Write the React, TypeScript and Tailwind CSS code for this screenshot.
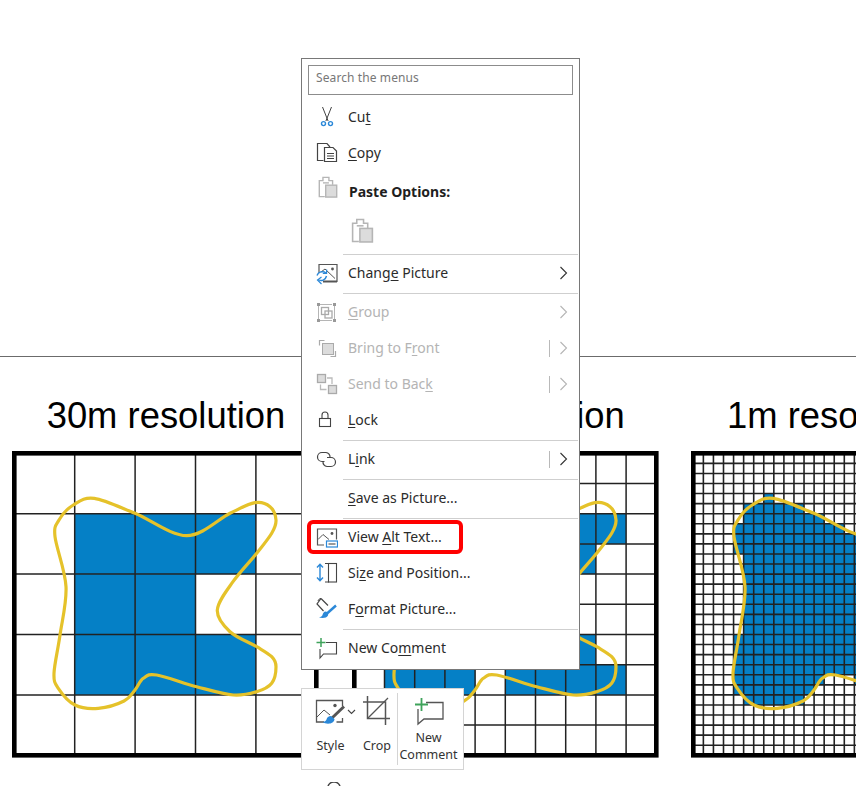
import type { ReactNode } from 'react';

const OUTLINE: [number, number][] = [
  [82.3, 47.3], [123, 62.3], [174.7, 84.7], [218, 62.3], [243, 51.7], [258, 55.7], [264, 69], [259.7, 82.3], [244.7, 102.3],
  [221, 130.7], [205.3, 159], [218, 180.7], [244.7, 195.7], [259.7, 205.7], [264, 215.7], [259.7, 232.3], [244.7, 240.7], [221.3, 244],
  [184.7, 235.7], [144.7, 224], [131.3, 227.3], [123, 239], [112, 250], [86.3, 257.3], [63, 254], [46.3, 237.3], [42, 222.3],
  [48, 184], [54, 135.7], [43, 85.7], [47, 69], [61.3, 54],
];

function buildOutline() {
  const n = OUTLINE.length;
  let d = `M${OUTLINE[0][0]} ${OUTLINE[0][1]}`;
  const poly: [number, number][] = [];
  for (let i = 0; i < n; i++) {
    const p0 = OUTLINE[(i - 1 + n) % n];
    const p1 = OUTLINE[i];
    const p2 = OUTLINE[(i + 1) % n];
    const p3 = OUTLINE[(i + 2) % n];
    const c1 = [p1[0] + (p2[0] - p0[0]) / 6, p1[1] + (p2[1] - p0[1]) / 6];
    const c2 = [p2[0] - (p3[0] - p1[0]) / 6, p2[1] - (p3[1] - p1[1]) / 6];
    d += ` C${c1[0].toFixed(1)} ${c1[1].toFixed(1)} ${c2[0].toFixed(1)} ${c2[1].toFixed(1)} ${p2[0]} ${p2[1]}`;
    for (let s = 0; s < 8; s++) {
      const t = s / 8;
      const u = 1 - t;
      poly.push([
        u * u * u * p1[0] + 3 * u * u * t * c1[0] + 3 * u * t * t * c2[0] + t * t * t * p2[0],
        u * u * u * p1[1] + 3 * u * u * t * c1[1] + 3 * u * t * t * c2[1] + t * t * t * p2[1],
      ]);
    }
  }
  return { d, poly };
}

const { d: outlinePath, poly } = buildOutline();

function inside(x: number, y: number) {
  let hit = false;
  for (let i = 0, j = poly.length - 1; i < poly.length; j = i++) {
    const [xi, yi] = poly[i];
    const [xj, yj] = poly[j];
    if (yi > y !== yj > y && x < ((xj - xi) * (y - yi)) / (yj - yi) + xi) hit = !hit;
  }
  return hit;
}

function Chart({ cells, title, titleClass }: { cells: number; title: string; titleClass: string }) {
  const origin = 2.3;
  const size = 302;
  const step = size / cells;
  const idx = Array.from({ length: cells }, (_, i) => i);
  return (
    <div className="w-[308px] shrink-0">
      <div className={`h-[95px] pt-[37px] text-[36.4px] leading-[46px] whitespace-nowrap text-black ${titleClass}`}>{title}</div>
      <svg width="308" height="307" viewBox="0 0 308 307" className="block">
        <rect x="0" y="0" width="308" height="307" fill="#fff" />
        {idx.map((r) =>
          idx.map((c) =>
            inside(origin + (c + 0.5) * step, origin + (r + 0.5) * step) ? (
              <rect key={`${r}-${c}`} x={origin + c * step} y={origin + r * step} width={step} height={step} fill="#0580c6" />
            ) : null,
          ),
        )}
        {idx.slice(1).map((i) => (
          <g key={i} stroke="#222" strokeWidth={cells > 20 ? 1.6 : 1.5}>
            <line x1={origin + i * step} x2={origin + i * step} y1={origin} y2={origin + size} />
            <line y1={origin + i * step} y2={origin + i * step} x1={origin} x2={origin + size} />
          </g>
        ))}
        <path d={outlinePath} fill="none" stroke="#e5c22a" strokeWidth="3.2" />
        <rect x={origin} y={origin} width={size} height={size} fill="none" stroke="#000" strokeWidth="4.6" />
      </svg>
    </div>
  );
}

const ink = '#444';
const blue = '#2b88d8';
const dim = '#b5b5b5';
const dimFill = '#dcdcdc';

function Ico({ children }: { children: ReactNode }) {
  return (
    <svg width="24" height="24" viewBox="0 0 24 24" fill="none" strokeWidth="1" className="block shrink-0">
      {children}
    </svg>
  );
}

const CutIcon = () => (
  <Ico>
    <path d="M8.500 2l5.600 14M17.500 2l-5.600 14" stroke={ink} />
    <circle cx="9.500" cy="18.600" r="2" stroke={blue} strokeWidth="1.400" />
    <circle cx="16.500" cy="18.600" r="2" stroke={blue} strokeWidth="1.400" />
  </Ico>
);

const CopyIcon = () => (
  <Ico>
    <path d="M9.500 19.500H3.500V2.500H13l3 3.500" stroke={ink} strokeWidth="1.200" />
    <path d="M10.500 6.500H19l3.500 3.500v10.500h-12z" stroke={ink} fill="#fff" strokeWidth="1.200" />
    <path d="M13 12.500h7M13 15h7M13 17.500h7" stroke={ink} />
  </Ico>
);

function PasteIcon({ size }: { size: number }) {
  return (
    <svg width={size} height={size} viewBox="0 0 24 24" fill="none" className="block shrink-0">
      <path d="M8.500 22.500H2.500V5h4V1.500h6.500V5h4v4.500" stroke={dim} strokeWidth="1.500" />
      <path d="M6.500 7.500h6.500" stroke={dim} strokeWidth="1.500" />
      <rect x="9.500" y="10" width="12" height="13" stroke={dim} strokeWidth="1.500" fill={dimFill} />
    </svg>
  );
}

const ChangeIcon = () => (
  <Ico>
    <path d="M5 12V3.500h18v17H12" stroke="#555" strokeWidth="1.200" />
    <path d="M7 11l4-3 10 9.500" stroke="#555" />
    <circle cx="18.500" cy="8" r="1.400" fill="#555" />
    <path d="M9 20.500H23" stroke="#555" strokeWidth="2" />
    <path d="M3 14.500a5.500 5 0 0 1 9-2.500M12.500 15a5.500 5.500 0 0 1-8.500 3.500" stroke={blue} strokeWidth="1.400" />
    <path d="M12.600 8.500V12.500H8.800M7.500 23l-4-4 4-3" stroke={blue} strokeWidth="1.200" />
  </Ico>
);

const GroupIcon = () => (
  <Ico>
    <path d="M6 4.500h12M6 20.500h12M4.500 6v13M20.500 6v13" stroke={dim} />
    <rect x="3" y="3" width="3" height="3" fill="#999" />
    <rect x="19" y="3" width="3" height="3" fill="#999" />
    <rect x="3" y="19" width="3" height="3" fill="#999" />
    <rect x="19" y="19" width="3" height="3" fill="#999" />
    <rect x="7.500" y="7.500" width="7" height="7" stroke="#aaa" strokeWidth="1.300" />
    <rect x="11" y="11" width="7" height="7" stroke="#aaa" strokeWidth="1.300" />
  </Ico>
);

const FrontIcon = () => (
  <Ico>
    <path d="M5.500 9.500v-5h5M21.500 15v5.500h-5" stroke="#aaa" strokeWidth="1.200" />
    <rect x="8.500" y="7.500" width="11" height="11" fill={dimFill} stroke="#aaa" />
  </Ico>
);

const BackIcon = () => (
  <Ico>
    <rect x="3.500" y="2.500" width="8" height="8" fill={dimFill} stroke="#aaa" strokeWidth="1.300" />
    <rect x="14.500" y="13.500" width="8" height="8" fill={dimFill} stroke="#aaa" strokeWidth="1.300" />
    <path d="M13 6h5v6M6.500 12.500v5h6" stroke="#bbb" strokeWidth="1.300" />
  </Ico>
);

const LockIcon = () => (
  <Ico>
    <rect x="5.500" y="10.500" width="11" height="8" stroke={ink} fill="#fff" strokeWidth="1.100" />
    <path d="M8 10.500V7a3 3 0 0 1 6 0v3.500" stroke={ink} strokeWidth="1.100" />
  </Ico>
);

const LinkIcon = () => (
  <Ico>
    <path d="M10.500 14.500H8a4.500 4.500 0 0 1 0-9h4a4.500 4.500 0 0 1 4 5" stroke={ink} strokeWidth="1.200" />
    <path d="M13 10.500h4a4.500 4.500 0 0 1 0 9h-4a4.500 4.500 0 0 1-4-5" stroke={ink} strokeWidth="1.200" />
  </Ico>
);

const AltIcon = () => (
  <Ico>
    <g transform="translate(0 1.500)">
      <path d="M10 18.500H3.500V2.500h19V13" stroke="#555" strokeWidth="1.200" />
      <path d="M4 13l5-5 6 5" stroke="#555" />
      <circle cx="18" cy="7" r="1.400" fill="#555" />
      <rect x="12.500" y="14.500" width="11" height="6" stroke={blue} strokeWidth="1.200" fill="#fff" />
      <rect x="14.500" y="16.500" width="7" height="2" fill="#9a9a9a" />
    </g>
  </Ico>
);

const SizeIcon = () => (
  <Ico>
    <path d="M6 3v17M3 6.500L6 3.200l3 3.300M3 16.500l3 3.300 3-3.300" stroke={blue} strokeWidth="1.400" />
    <path d="M11 2.500h4M11 21h4" stroke={ink} />
    <rect x="14.500" y="2.500" width="8" height="18.500" stroke={ink} strokeWidth="1.100" />
  </Ico>
);

const FormatIcon = () => (
  <Ico>
    <path d="M7 1.500L3 7l6.500 7M7 1.500l7 7" stroke={ink} strokeWidth="1.200" />
    <path d="M7 1.500c-1.500 0-2.500 1-3 2.500" stroke={ink} />
    <path d="M22 8.500L13 16.500" stroke={blue} strokeWidth="2.400" />
    <path d="M12 14.500c-2.500 0-3 2-3.500 3.500-.3 1-1.500 2-3.500 2.500 3.500 1 8 .5 9-2 .5-1.500 0-3-2-4z" fill={blue} />
  </Ico>
);

const CommentIcon = () => (
  <Ico>
    <g transform="translate(0 1)">
      <path d="M12 5.500h10.500V17H9.500L6 21v-9" stroke={ink} strokeWidth="1.100" />
      <path d="M7 1v9M2.500 5.500h9" stroke="#3fa35b" strokeWidth="1.500" />
    </g>
  </Ico>
);

type Row = {
  h: string;
  label: ReactNode;
  icon?: ReactNode;
  off?: boolean;
  arrow?: boolean;
  bar?: boolean;
  line?: boolean;
};

const ROWS: Row[] = [
  { h: 'h-[36px]', icon: <CutIcon />, label: <>Cu<u>t</u></> },
  { h: 'h-[36px]', icon: <CopyIcon />, label: <><u>C</u>opy</> },
  { h: 'h-[42px]', icon: <div className="-mt-[10px] ml-[3px]"><PasteIcon size={22} /></div>, label: <b className="font-bold text-[#1f1f1f] pl-px">Paste Options:</b> },
  { h: 'h-[42px]', label: <div className="-mt-[7px] ml-[2px]"><PasteIcon size={25} /></div>, line: true },
  { h: 'h-[39px]', icon: <ChangeIcon />, label: <>Chang<u>e</u> Picture</>, arrow: true, line: true },
  { h: 'h-[36px]', icon: <GroupIcon />, label: <><u>G</u>roup</>, off: true, arrow: true },
  { h: 'h-[36px]', icon: <FrontIcon />, label: <>Bring to F<u>r</u>ont</>, off: true, arrow: true, bar: true },
  { h: 'h-[36px]', icon: <BackIcon />, label: <>Send to Bac<u>k</u></>, off: true, arrow: true, bar: true },
  { h: 'h-[39px]', icon: <LockIcon />, label: <><u>L</u>ock</>, line: true },
  { h: 'h-[39px]', icon: <LinkIcon />, label: <>L<u>i</u>nk</>, arrow: true, bar: true, line: true },
  { h: 'h-[39px]', label: <><u>S</u>ave as Picture...</>, line: true },
  { h: 'h-[36px]', icon: <AltIcon />, label: <>View <u>A</u>lt Text...</> },
  { h: 'h-[36px]', icon: <SizeIcon />, label: <>Si<u>z</u>e and Position...</> },
  { h: 'h-[39px]', icon: <FormatIcon />, label: <>F<u>o</u>rmat Picture...</>, line: true },
  { h: 'h-[39px]', icon: <CommentIcon />, label: <>New Co<u>m</u>ment</> },
];

function Chevron({ off }: { off?: boolean }) {
  return (
    <svg width="10" height="14" viewBox="0 0 10 14" fill="none" className="block">
      <path d="M1.500 1l6 6-6 6" stroke={off ? '#b5b5b5' : '#333'} strokeWidth="1.100" />
    </svg>
  );
}

function MenuRow({ row }: { row: Row }) {
  const tall = row.h !== 'h-[36px]' && row.h !== 'h-[42px]';
  return (
    <div className={`relative flex items-center ${row.h} ${tall ? 'pb-[3px]' : ''} ${row.off ? 'text-[#b4b4b4]' : 'text-[#2b2b2b]'}`}>
      <div className="flex w-[46px] shrink-0 justify-start pl-[12px]">{row.icon}</div>
      <div className="flex-1 whitespace-nowrap underline-offset-2">{row.label}</div>
      {row.bar && <div className="h-[17px] w-px bg-[#b9b9b9]" />}
      {row.arrow && (
        <div className="ml-[9px] mr-[10px]">
          <Chevron off={row.off} />
        </div>
      )}
      {row.line && <div className="absolute bottom-0 left-[41px] right-px h-px bg-[#cfcfcf]" />}
    </div>
  );
}

function ContextMenu() {
  return (
    <div className="absolute left-[301px] top-[58px] w-[279px] border border-[#787878] bg-white text-[14px] leading-5 font-['Noto_Sans',sans-serif]">
      <div className="px-[6px] pt-[6px] pb-[4px]">
        <div className="flex h-[30px] items-center border border-[#8c8c8c] pb-[4px] pl-[7px] text-[12px] tracking-[0.1px] text-[#777]">
          Search the menus
        </div>
      </div>
      {ROWS.map((row, i) => (
        <MenuRow key={i} row={row} />
      ))}
    </div>
  );
}

function MiniToolbar() {
  return (
    <div className="absolute left-[301px] top-[688px] flex h-[82px] w-[163px] border border-[#d4d4d4] bg-white text-[12.5px] leading-[17px] text-[#333] font-['Noto_Sans',sans-serif]">
      <div className="flex w-[57px] flex-col items-center">
        <svg width="44" height="30" viewBox="0 0 44 30" fill="none" className="mt-[9px] ml-[10px] block">
          <path d="M10 24H2.500V2.500h26V8M28.500 20v4h-6" stroke="#555" strokeWidth="1.300" />
          <path d="M3 19l7-7 6 5" stroke="#555" />
          <circle cx="21" cy="7.500" r="1.700" fill="#555" />
          <path d="M30 8.500L18 20" stroke="#555" strokeWidth="3" />
          <path d="M17 18c-2.500 0-4 1.500-4.500 3.500-.5 1.500-2 2.500-4 2.500 4 3 12 2 12-3z" fill={blue} />
          <path d="M34 12l3.500 3.500L41 12" stroke="#444" strokeWidth="1.100" />
        </svg>
        <div className="mt-[9px]">Style</div>
      </div>
      <div className="flex w-[38px] flex-col items-center pr-[2px]">
        <svg width="30" height="30" viewBox="0 0 30 30" fill="none" className="mt-[7px] block">
          <path d="M5.500 0v22.500H28M1 6h22.500V29" stroke="#555" strokeWidth="1.500" />
          <path d="M5.500 22.500L26 2" stroke="#555" strokeWidth="1.200" />
        </svg>
        <div className="mt-[11px]">Crop</div>
      </div>
      <div className="my-[4px] w-px bg-[#d4d4d4]" />
      <div className="flex flex-1 flex-col items-center pr-[4px]">
        <svg width="32" height="30" viewBox="0 0 32 30" fill="none" className="mt-[9px] block">
          <path d="M13 4.500h17V21H11l-6 5V11" stroke="#555" strokeWidth="1.300" />
          <path d="M8.500 0v13M2 6.500h13" stroke="#3fa35b" strokeWidth="1.800" />
        </svg>
        <div className="mt-[1px] text-center">
          New
          <br />
          Comment
        </div>
      </div>
    </div>
  );
}

export default function App() {
  return (
    <div className="relative h-[786px] w-[856px] overflow-hidden bg-white font-['Liberation_Sans',sans-serif]">
      <div className="h-[357px] border-b border-[#6b6b6b]" />
      <div className="flex w-max gap-[31.5px] pl-[12px] -mt-px">
        <Chart cells={5} title="30m resolution" titleClass="text-center" />
        <Chart cells={10} title="10m resolution" titleClass="text-center" />
        <Chart cells={30} title="1m resolution" titleClass="pl-[36px]" />
      </div>
      <ContextMenu />
      <MiniToolbar />
      <div className="absolute left-[307px] top-[520px] h-[34px] w-[156px] rounded-[6px] border-4 border-[#ff0000]" />
      <svg width="16" height="4" viewBox="0 0 16 4" fill="none" className="absolute left-[326px] top-[782px] block">
        <path d="M2 5a6 5 0 0 1 12 0" stroke="#444" strokeWidth="1.500" />
      </svg>
    </div>
  );
}
